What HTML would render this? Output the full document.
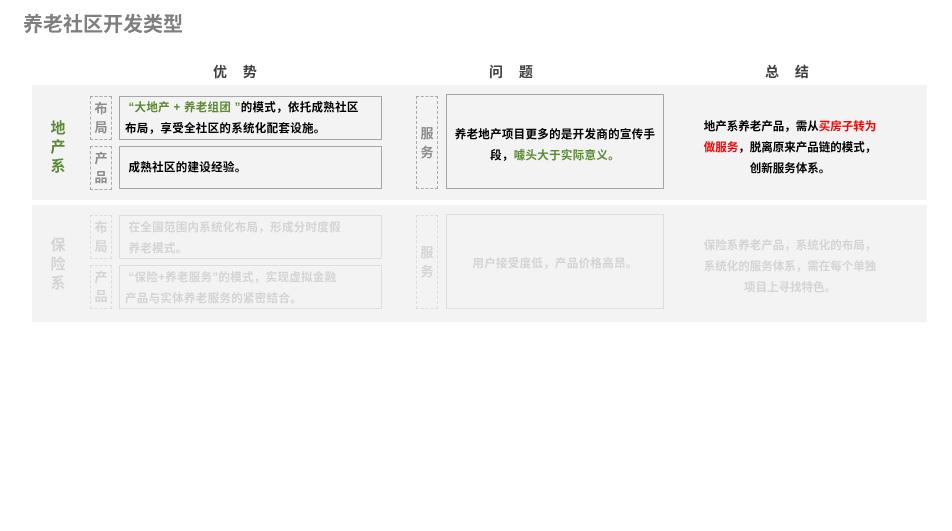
<!DOCTYPE html><html><head><meta charset="utf-8"><style>
body{margin:0;width:952px;height:531px;background:#fff;position:relative;overflow:hidden;font-family:"Liberation Sans","Noto Sans CJK SC",sans-serif;font-weight:bold}
div{position:absolute;box-sizing:border-box}
.t{font-size:20px;color:#7f7f7f;left:23px;top:8px}
.h{font-size:14px;color:#404040;top:62px;letter-spacing:6px}
.bg{left:32px;width:895px;background:#f3f3f3}
.lab{font-size:15px;line-height:19px;width:20px;text-align:center}
.d{border:1px dashed #aaa;width:22px;left:90px;font-size:13px;line-height:19px;text-align:center;color:#8c8c8c;display:flex;align-items:center;justify-content:center;padding:0 3px}
.b{border:1.5px solid #a6a6a6;left:119px;width:263px;font-size:11.5px;line-height:21px;padding:3px 5px;color:#000;white-space:nowrap;letter-spacing:0.3px}
.g{color:#5a8a32}.r{color:#f00}
.f .d,.f .b{border-color:#ddd;color:#d4d4d4}
.f{color:#d4d4d4}
.s{font-size:11.5px;line-height:21px;text-align:center;white-space:nowrap;left:680px;width:220px}
</style></head><body>
<div class="t">养老社区开发类型</div>
<div class="h" style="left:213px">优 势</div>
<div class="h" style="left:489px">问 题</div>
<div class="h" style="left:765px">总 结</div>
<div class="bg" style="top:85px;height:115px"></div>
<div class="bg" style="top:205px;height:117px"></div>
<div class="lab g" style="left:48px;top:119px">地产系</div>
<div class="d" style="top:96px;height:44px">布局</div>
<div class="b" style="top:96px;height:44px;padding-top:1px"><span class="g">&nbsp;“大地产 + 养老组团 ”</span>的模式，依托成熟社区<br>布局，享受全社区的系统化配套设施。</div>
<div class="d" style="top:146px;height:44px">产品</div>
<div class="b" style="top:146px;height:43px;padding-top:11px">&nbsp;成熟社区的建设经验。</div>
<div class="d" style="left:416px;top:96px;height:93px">服务</div>
<div class="b" style="left:446px;width:218px;top:94px;height:95px;text-align:center;padding:30px 0 0">养老地产项目更多的是开发商的宣传手<br>段，<span class="g">噱头大于实际意义。</span></div>
<div class="s" style="top:117px;color:#000">地产系养老产品，需从<span class="r">买房子转为</span><br><span class="r">做服务</span>，脱离原来产品链的模式，<br>创新服务体系。</div>
<div class="f">
<div class="lab" style="left:48px;top:236px;color:#d4d4d4">保险系</div>
<div class="d" style="top:215px;height:44px">布局</div>
<div class="b" style="top:215px;height:44px;padding-top:2px">&nbsp;在全国范围内系统化布局，形成分时度假<br>&nbsp;养老模式。</div>
<div class="d" style="top:265px;height:44px">产品</div>
<div class="b" style="top:265px;height:44px;padding-top:2px">&nbsp;“保险+养老服务”的模式，实现虚拟金融<br>产品与实体养老服务的紧密结合。</div>
<div class="d" style="left:416px;top:215px;height:94px">服务</div>
<div class="b" style="left:446px;width:218px;top:214px;height:95px;text-align:center;padding:39px 0 0">用户接受度低，产品价格高昂。</div>
<div class="s" style="top:236px">保险系养老产品，系统化的布局，<br>系统化的服务体系，需在每个单独<br>项目上寻找特色。</div>
</div>
</body></html>
